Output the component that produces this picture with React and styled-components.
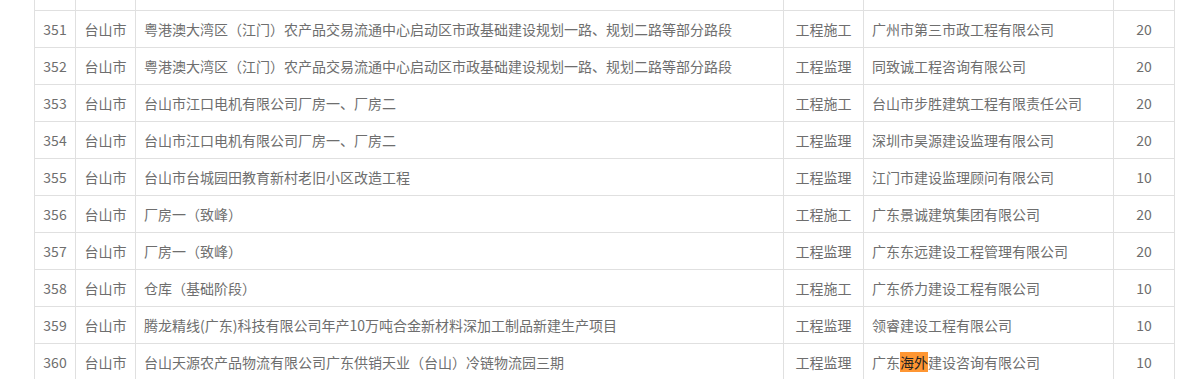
import { createGlobalStyle, styled } from 'styled-components';

const GlobalStyle = createGlobalStyle`
  html, body {
    margin: 0;
    padding: 0;
    background: #fff;
  }
  body {
    font-family: "Noto Sans CJK SC", "Noto Sans", sans-serif;
  }
`;

const Viewport = styled.div`
  height: 379px;
  overflow: hidden;
  padding-left: 34px;
`;

// список прокручен: верхняя строка видна только своим нижним краем
const Table = styled.table`
  margin-top: -27px;
  width: 1140px;
  border-collapse: collapse;
  table-layout: fixed;
  font-size: 14px;
  color: #6e6e6e;
`;

const Col = styled.col`
  width: ${p => p.$w}px;
`;

const Cell = styled.td`
  height: 36px;
  padding: 0 8px;
  border: 1px solid #e0e0e0;
  text-align: ${p => p.$align || 'center'};
  white-space: nowrap;
  overflow: hidden;
  line-height: 20px;
`;

const Hit = styled.mark`
  background: #ff9632;
  color: #222;
`;

const widths = [41, 60, 648, 80, 250, 61];

const rows = [
  { no: '', city: '', name: '', type: '', company: '', score: '' },
  { no: 351, city: '台山市', name: '粤港澳大湾区（江门）农产品交易流通中心启动区市政基础建设规划一路、规划二路等部分路段', type: '工程施工', company: '广州市第三市政工程有限公司', score: 20 },
  { no: 352, city: '台山市', name: '粤港澳大湾区（江门）农产品交易流通中心启动区市政基础建设规划一路、规划二路等部分路段', type: '工程监理', company: '同致诚工程咨询有限公司', score: 20 },
  { no: 353, city: '台山市', name: '台山市江口电机有限公司厂房一、厂房二', type: '工程施工', company: '台山市步胜建筑工程有限责任公司', score: 20 },
  { no: 354, city: '台山市', name: '台山市江口电机有限公司厂房一、厂房二', type: '工程监理', company: '深圳市昊源建设监理有限公司', score: 20 },
  { no: 355, city: '台山市', name: '台山市台城园田教育新村老旧小区改造工程', type: '工程监理', company: '江门市建设监理顾问有限公司', score: 10 },
  { no: 356, city: '台山市', name: '厂房一（致峰）', type: '工程施工', company: '广东景诚建筑集团有限公司', score: 20 },
  { no: 357, city: '台山市', name: '厂房一（致峰）', type: '工程监理', company: '广东东远建设工程管理有限公司', score: 20 },
  { no: 358, city: '台山市', name: '仓库（基础阶段）', type: '工程施工', company: '广东侨力建设工程有限公司', score: 10 },
  { no: 359, city: '台山市', name: '腾龙精线(广东)科技有限公司年产10万吨合金新材料深加工制品新建生产项目', type: '工程监理', company: '领睿建设工程有限公司', score: 10 },
  { no: 360, city: '台山市', name: '台山天源农产品物流有限公司广东供销天业（台山）冷链物流园三期', type: '工程监理', company: <>广东<Hit>海外</Hit>建设咨询有限公司</>, score: 10 },
];

export default function App() {
  return (
    <>
      <GlobalStyle />
      <Viewport>
        <Table>
          <colgroup>
            {widths.map((w, i) => <Col key={i} $w={w} />)}
          </colgroup>
          <tbody>
            {rows.map((r, i) => (
              <tr key={i}>
                <Cell>{r.no}</Cell>
                <Cell>{r.city}</Cell>
                <Cell $align="left">{r.name}</Cell>
                <Cell>{r.type}</Cell>
                <Cell $align="left">{r.company}</Cell>
                <Cell>{r.score}</Cell>
              </tr>
            ))}
          </tbody>
        </Table>
      </Viewport>
    </>
  );
}
